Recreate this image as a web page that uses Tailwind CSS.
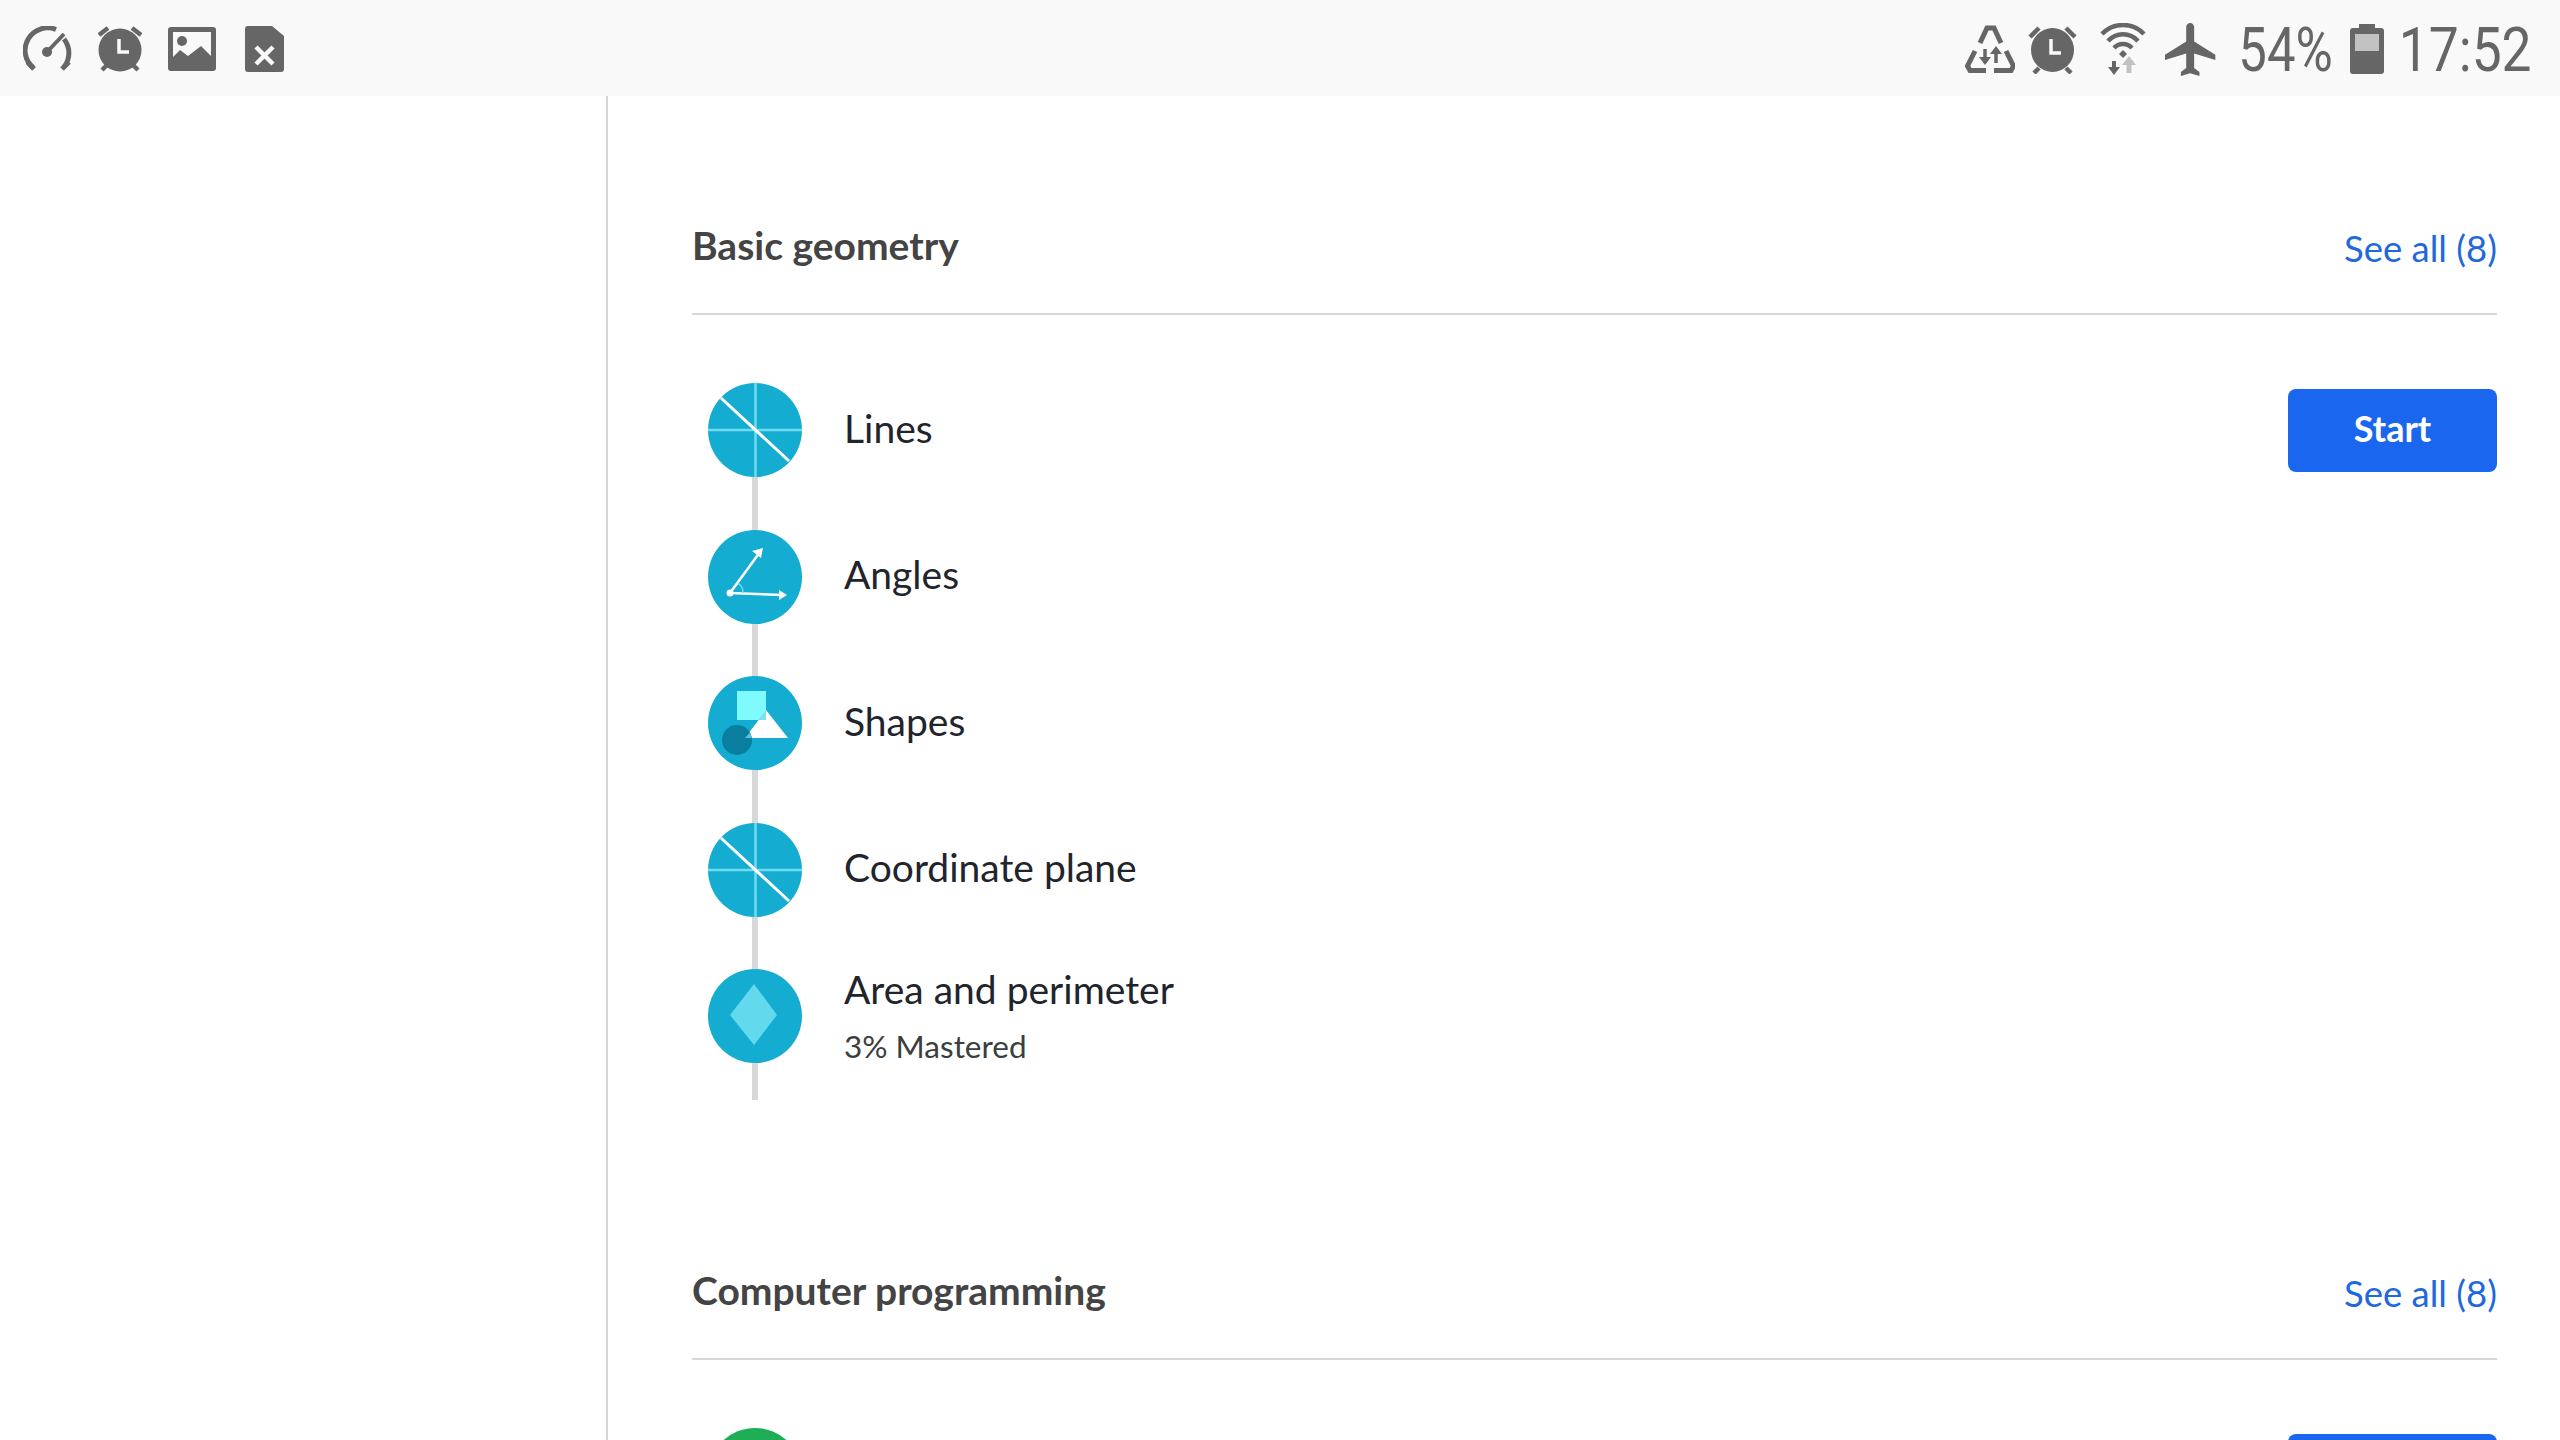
<!DOCTYPE html>
<html lang="en">

<head>
    <meta charset="UTF-8">
    <meta name="viewport" content="width=device-width, initial-scale=1.0">
    <title>Math course</title>
    <script src="https://cdn.jsdelivr.net/npm/@tailwindcss/browser@4"></script>
</head>

<body class="bg-white h-screen overflow-hidden font-['Lato',sans-serif]">
    <!-- Status bar -->
    <div class="h-[96px] bg-[#f9f9f9] flex items-center pt-[2px] pl-[23px] pr-[29px] text-[#666666]">
        <svg class="w-[50px] h-[46px] mr-[23px]" viewBox="0 0 50 46" fill="none" stroke="#666666">
            <path d="M10 41.500 A22.500 22.500 0 0 1 33 3.500" stroke-width="5" />
            <path d="M41 13 A22.500 22.500 0 0 1 41 41" stroke-width="5" />
            <path d="M4.500 36 L11 43 M46 36 L39 43" stroke-width="5" />
            <path d="M25 25 L41 8" stroke-width="4" />
            <circle cx="24" cy="26" r="5" fill="#666666" stroke="none" />
        </svg>
        <svg class="w-[48px] h-[46px] mr-[24px]" viewBox="0 0 48 46">
            <circle cx="24" cy="24" r="21.500" fill="#666666" />
            <path d="M3 9 L12 2 M45 9 L36 2 M6 44 L11 39 M42 44 L37 39" stroke="#666666" stroke-width="4.500" />
            <path d="M23 13 V26 H33" fill="none" stroke="#f9f9f9" stroke-width="3.500" />
        </svg>
        <svg class="w-[48px] h-[44px] mr-[29px]" viewBox="0 0 48 44">
            <path fill-rule="evenodd" fill="#666666" d="M3 0 H45 A3 3 0 0 1 48 3 V41 A3 3 0 0 1 45 44 H3 A3 3 0 0 1 0 41 V3 A3 3 0 0 1 3 0 Z M5 5 V30 L12 23 L20 29 L33 19 L43 29 V5 Z" />
            <circle cx="14" cy="14" r="5" fill="#666666" />
        </svg>
        <svg class="w-[39px] h-[47px]" viewBox="0 0 39 47">
            <path fill="#666666" d="M3 0 H27 L39 10 V43 A3 3 0 0 1 36 46 H3 A3 3 0 0 1 0 43 V3 A3 3 0 0 1 3 0 Z" />
            <path d="M11 21 L28 38 M28 21 L11 38" stroke="#f9f9f9" stroke-width="4.500" />
        </svg>

        <div class="ml-auto flex items-center">
            <svg class="w-[50px] h-[48px] mr-[13px]" viewBox="0 0 50 48" fill="none" stroke="#666666" stroke-width="5">
                <path d="M15 18 L22 3 H29 L36 18" />
                <path d="M10 26 L2.500 41 L5 45.500 H21" />
                <path d="M41 26 L48.500 41 L46 45.500 H29" />
                <path d="M20 24 V38 M31 38 V24" stroke-width="3.500" />
                <path d="M14 32 L20 40 L26 32 Z M25 29 L31 21 L37 29 Z" fill="#666666" stroke="none" />
            </svg>
            <svg class="w-[49px] h-[50px] mr-[23px]" viewBox="0 0 49 50">
                <ellipse cx="24.500" cy="26" rx="21.500" ry="22" fill="#666666" />
                <path d="M2 13 L11 4 M47 13 L38 4 M6 49 L11 44 M43 49 L38 44" stroke="#666666" stroke-width="4.500" />
                <path d="M23 15 V29 H33" fill="none" stroke="#f9f9f9" stroke-width="3.500" />
            </svg>
            <svg class="w-[46px] h-[52px] mr-[19px]" viewBox="0 0 46 52" fill="none" stroke="#666666" stroke-width="4.500">
                <path d="M2 11 A29 29 0 0 1 44 11" />
                <path d="M8 18 A20 20 0 0 1 38 18" />
                <path d="M14 25 A12 12 0 0 1 32 25" />
                <path d="M19 31 L23 27 L27 31 L23 35 Z" fill="#666666" stroke="none" />
                <path d="M14 38 V48" stroke-width="4" />
                <path d="M8 44 L14 52 L20 44 Z" fill="#666666" stroke="none" />
                <path d="M29 40 V50" stroke="#c2c2c2" stroke-width="5" />
                <path d="M22 42 L29 33 L36 42 Z" fill="#c2c2c2" stroke="none" />
            </svg>
            <svg class="w-[53px] h-[53px] mr-[21px]" viewBox="2 2 20 20">
                <path fill="#666666" d="M21 16v-2l-8-5V3.500c0-.83-.67-1.500-1.500-1.500S10 2.670 10 3.500V9l-8 5v2l8-2.500V19l-2 1.500V22l3.500-1 3.500 1v-1.500L13 19v-5.500l8 2.500z" />
            </svg>
            <div class="w-[94px] mr-[17px] flex justify-center">
                <span class="text-[62px] leading-none font-['Roboto',sans-serif] font-normal scale-x-[.82] whitespace-nowrap mt-[2px]">54%</span>
            </div>
            <svg class="w-[34px] h-[50px] mr-[15px]" viewBox="0 0 34 50">
                <path fill="#666666" d="M9 0 H25 V4 H31 A3 3 0 0 1 34 7 V47 A3 3 0 0 1 31 50 H3 A3 3 0 0 1 0 47 V7 A3 3 0 0 1 3 4 H9 Z" />
                <rect x="5" y="10" width="24" height="17" fill="#c2c2c2" />
            </svg>
            <div class="w-[132px] flex justify-center">
                <span class="text-[62px] leading-none font-['Roboto',sans-serif] font-normal scale-x-[.86] whitespace-nowrap mt-[2px]">17:52</span>
            </div>
        </div>
    </div>

    <div class="flex h-[1344px] overflow-hidden">
        <!-- Sidebar -->
        <div class="w-[608px] shrink-0 border-r-2 border-[#d6d6d6]"></div>

        <!-- Content -->
        <div class="flex-1 pl-[84px] pr-[63px]">
            <section class="pt-[129px]">
                <div class="h-[90px] pb-[47px] border-b-2 border-[#d6d8da] flex items-center justify-between">
                    <h2 class="text-[39px] font-bold text-[#444444] leading-none">Basic geometry</h2>
                    <a class="text-[36.500px] text-[#1f69dc] leading-none mt-[5px]">See all (8)</a>
                </div>

                <div class="relative mt-[68px] pb-[37px] pl-[16px] flex flex-col gap-[52.500px]">
                    <div class="absolute left-[60px] top-0 bottom-0 w-[6px] bg-[#d6d8da]"></div>

                    <div class="relative flex items-center h-[94px]">
                        <svg class="w-[94px] h-[94px] mr-[42px]" viewBox="0 0 94 94">
                            <circle cx="47" cy="47" r="47" fill="#14acd0" />
                            <path d="M47.500 0 V94 M0 47 H94" stroke="#70dcf0" stroke-width="2.500" />
                            <path d="M13 15 L81 78" stroke="#ffffff" stroke-width="3" />
                        </svg>
                        <span class="text-[39px] text-[#21242c] leading-none mb-[4px]">Lines</span>
                        <button class="ml-auto w-[209px] h-[83px] pb-[5px] rounded-[8px] bg-[#1a66ee] text-white text-[36px] font-bold">Start</button>
                    </div>

                    <div class="relative flex items-center h-[94px]">
                        <svg class="w-[94px] h-[94px] mr-[42px]" viewBox="0 0 94 94">
                            <circle cx="47" cy="47" r="47" fill="#14acd0" />
                            <path d="M22 63 L52 22 M22 63 L74 65" stroke="#ffffff" stroke-width="2.500" fill="none" />
                            <path d="M55 18 L44 21 L53 28 Z M79 65 L71 60 L71 70 Z" fill="#ffffff" />
                            <circle cx="22" cy="63" r="3.500" fill="#ffffff" />
                            <path d="M30 53 A12 12 0 0 1 35 63" stroke="#70dcf0" stroke-width="1.500" fill="none" />
                        </svg>
                        <span class="text-[39px] text-[#21242c] leading-none mb-[5px]">Angles</span>
                    </div>

                    <div class="relative flex items-center h-[94px]">
                        <svg class="w-[94px] h-[94px] mr-[42px]" viewBox="0 0 94 94">
                            <circle cx="47" cy="47" r="47" fill="#14acd0" />
                            <rect x="29" y="15" width="29" height="29" fill="#7ffaff" />
                            <path d="M58 34 L80 62 H37 Z" fill="#ffffff" />
                            <path d="M58 34 V44 H50 Z" fill="#7fe0f0" />
                            <circle cx="29" cy="64" r="15" fill="#0a7e9e" />
                            <path d="M37 62 H43.500 A15 15 0 0 0 42 56.500 Z" fill="#55c5de" />
                        </svg>
                        <span class="text-[39px] text-[#21242c] leading-none mb-[3px]">Shapes</span>
                    </div>

                    <div class="relative flex items-center h-[94px]">
                        <svg class="w-[94px] h-[94px] mr-[42px]" viewBox="0 0 94 94">
                            <circle cx="47" cy="47" r="47" fill="#14acd0" />
                            <path d="M47.500 0 V94 M0 47 H94" stroke="#70dcf0" stroke-width="2.500" />
                            <path d="M13 15 L81 78" stroke="#ffffff" stroke-width="3" />
                        </svg>
                        <span class="text-[39px] text-[#21242c] leading-none mb-[5px]">Coordinate plane</span>
                    </div>

                    <div class="relative flex items-center h-[94px]">
                        <svg class="w-[94px] h-[94px] mr-[42px]" viewBox="0 0 94 94">
                            <circle cx="47" cy="47" r="47" fill="#14acd0" />
                            <path d="M46 15 L69 46 L46 76 L22 46 Z" fill="#62d9ec" />
                        </svg>
                        <div class="flex flex-col">
                            <span class="text-[39px] text-[#21242c] leading-none">Area and perimeter</span>
                            <span class="text-[31.500px] text-[#3b3e40] leading-none mt-[22px]">3% Mastered</span>
                        </div>
                    </div>
                </div>
            </section>

            <section class="mt-[170px]">
                <div class="h-[90px] pb-[47px] border-b-2 border-[#d6d8da] flex items-center justify-between">
                    <h2 class="text-[39px] font-bold text-[#444444] leading-none">Computer programming</h2>
                    <a class="text-[36.500px] text-[#1f69dc] leading-none mt-[5px]">See all (8)</a>
                </div>

                <div class="relative mt-[68px] pl-[16px] flex">
                    <div class="w-[94px] h-[94px] rounded-full bg-[#1fad55]"></div>
                    <div class="ml-auto mt-[6px] w-[209px] h-[83px] rounded-[8px] bg-[#1a66ee]"></div>
                </div>
            </section>
        </div>
    </div>
</body>

</html>
